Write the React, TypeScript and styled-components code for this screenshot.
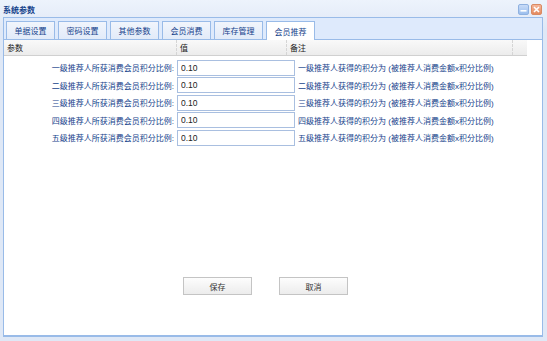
import React, { useState } from 'react'
import styled, { createGlobalStyle } from 'styled-components'

const GlobalStyle = createGlobalStyle`
    html, body {
        margin: 0;
        padding: 0;
        background: #dfe8f6;
    }
    * {
        box-sizing: border-box;
    }
`
const Win = styled.div`
    width: 547px;
    height: 341px;
    display: flex;
    flex-direction: column;
    background: linear-gradient(#edf3fc, #dfe8f6 30px, #dfe8f6);
    font-family: "Liberation Sans", "Noto Sans CJK SC", sans-serif;
    font-size: 8px;
    color: #15428b;
    overflow: hidden;
`
const TitleBar = styled.div`
    height: 17px;
    display: flex;
    align-items: center;
    justify-content: space-between;
    padding: 0 5px 0 3px;
`
const Title = styled.div`
    font-weight: bold;
    font-size: 8px;
    color: #15428b;
    padding-top: 1px;
`
const Tools = styled.div`
    display: flex;
    gap: 2px;
    padding-top: 1px;
`
const Tool = styled.div<{ $kind: 'min' | 'close' }>`
    width: 11px;
    height: 11px;
    border-radius: 2px;
    display: flex;
    align-items: center;
    justify-content: center;
    border: 1px solid ${p => p.$kind === 'min' ? '#8fb1e0' : '#d98a63'};
    background: ${p => p.$kind === 'min'
        ? 'linear-gradient(#c8dbf7, #9cbfee)'
        : 'linear-gradient(#f6b79a, #e38a5f)'};
`
const Panel = styled.div`
    flex: 1;
    margin: 0 4px 4px 3px;
    border: 1px solid #99bbe8;
    border-bottom-width: 2px;
    background: #fff;
    display: flex;
    flex-direction: column;
`
const TabStrip = styled.div`
    height: 22px;
    display: flex;
    align-items: flex-end;
    gap: 3px;
    padding-left: 2px;
    background: #deeafc;
    border-bottom: 1px solid #99bbe8;
`
const Tab = styled.div<{ $active?: boolean }>`
    height: ${p => p.$active ? '19px' : '18px'};
    padding: 0 7.5px;
    display: flex;
    align-items: center;
    border: 1px solid #99bbe8;
    border-bottom: none;
    margin-bottom: ${p => p.$active ? '-1px' : '0'};
    background: ${p => p.$active ? '#fff' : 'linear-gradient(#f1f5fc, #e2ebf9)'};
    color: #15428b;
    cursor: pointer;
`
const Content = styled.div`
    width: 523px;
    flex: 1;
    display: flex;
    flex-direction: column;
`
const GridHead = styled.div`
    height: 16px;
    display: grid;
    grid-template-columns: 173px 110px 226px 1fr;
    background: linear-gradient(#f9f9f9, #ececec);
    border-bottom: 1px solid #d0d0d0;
`
const HeadCell = styled.div<{ $last?: boolean }>`
    display: flex;
    align-items: center;
    padding-left: 3px;
    color: #222;
    border-right: ${p => p.$last ? 'none' : '1px dashed #d5d5d5'};
`
const Rows = styled.div`
    display: flex;
    flex-direction: column;
    padding-top: 3.5px;
    gap: 1.8px;
`
const Row = styled.div`
    height: 15.8px;
    display: grid;
    grid-template-columns: 170px 118px 1fr;
    column-gap: 3px;
    align-items: center;
`
const Label = styled.div`
    text-align: right;
    color: #15428b;
    white-space: nowrap;
`
const Field = styled.input`
    width: 118px;
    height: 16px;
    border: 1px solid #a9bfe0;
    padding: 0 3px;
    font-family: "Liberation Sans", sans-serif;
    font-size: 8.5px;
    color: #222;
    outline: none;
`
const Note = styled.div`
    color: #15428b;
    white-space: nowrap;
`
const Footer = styled.div`
    margin-top: auto;
    height: 58px;
    display: flex;
    justify-content: center;
    gap: 27px;
`
const Btn = styled.button`
    width: 69px;
    height: 18px;
    border: 1px solid #c4c4c4;
    background: linear-gradient(#fdfdfd, #ececec);
    font-family: "Liberation Sans", "Noto Sans CJK SC", sans-serif;
    font-size: 8px;
    color: #333;
    cursor: pointer;
    padding: 0;
`

const tabs = ['单据设置', '密码设置', '其他参数', '会员消费', '库存管理', '会员推荐']
const levels = ['一', '二', '三', '四', '五']

const App = () => {
    const [active, setActive] = useState(5)
    const [values, setValues] = useState<string[]>(levels.map(() => '0.10'))

    return (
        <Win>
            <GlobalStyle />
            <TitleBar>
                <Title>系统参数</Title>
                <Tools>
                    <Tool $kind="min">
                        <svg width="7" height="7" viewBox="0 0 7 7">
                            <rect x="0.5" y="4" width="6" height="1.6" fill="#fff" />
                        </svg>
                    </Tool>
                    <Tool $kind="close">
                        <svg width="7" height="7" viewBox="0 0 7 7">
                            <path d="M1 1 L6 6 M6 1 L1 6" stroke="#fff" strokeWidth="1.6" />
                        </svg>
                    </Tool>
                </Tools>
            </TitleBar>
            <Panel>
                <TabStrip>
                    {tabs.map((t, i) => (
                        <Tab key={t} $active={i === active} onClick={() => setActive(i)}>{t}</Tab>
                    ))}
                </TabStrip>
                <Content>
                    <GridHead>
                        <HeadCell>参数</HeadCell>
                        <HeadCell>值</HeadCell>
                        <HeadCell>备注</HeadCell>
                        <HeadCell $last />
                    </GridHead>
                    <Rows>
                        {levels.map((l, i) => (
                            <Row key={l}>
                                <Label>{l}级推荐人所获消费会员积分比例:</Label>
                                <Field
                                    value={values[i]}
                                    onChange={e => {
                                        const next = [...values]
                                        next[i] = e.target.value
                                        setValues(next)
                                    }}
                                />
                                <Note>{l}级推荐人获得的积分为 (被推荐人消费金额x积分比例)</Note>
                            </Row>
                        ))}
                    </Rows>
                    <Footer>
                        <Btn>保存</Btn>
                        <Btn>取消</Btn>
                    </Footer>
                </Content>
            </Panel>
        </Win>
    )
}

export default App
